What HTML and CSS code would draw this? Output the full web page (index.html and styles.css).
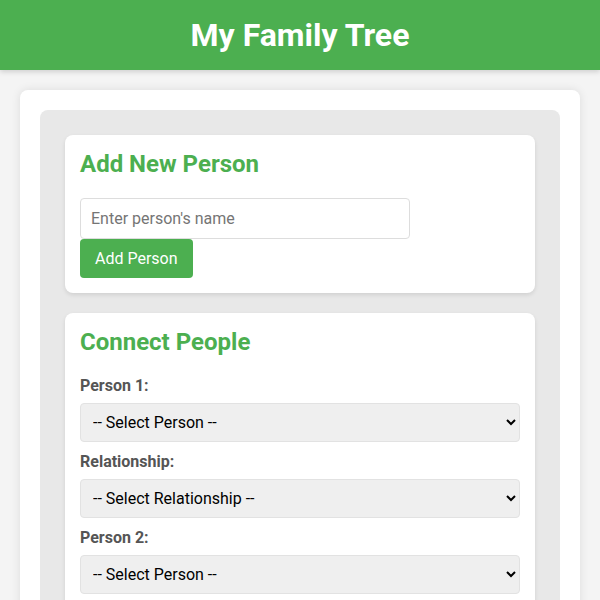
FILE: index.html
```html
<!DOCTYPE html>
<html>
<head>
<meta charset="utf-8">
<title>My Family Tree</title>
<link rel="stylesheet" href="styles.css">
</head>
<body>
<header class="header">
  <h1 class="title">My Family Tree</h1>
</header>
<main class="container">
  <div class="panel">
    <section class="card">
      <h2 class="card-title">Add New Person</h2>
      <input class="name-input" type="text" placeholder="Enter person's name">
      <button class="btn">Add Person</button>
    </section>
    <section class="card">
      <h2 class="card-title">Connect People</h2>
      <label class="field-label">Person 1:</label>
      <select class="field-select"><option>-- Select Person --</option></select>
      <label class="field-label">Relationship:</label>
      <select class="field-select"><option>-- Select Relationship --</option></select>
      <label class="field-label">Person 2:</label>
      <select class="field-select"><option>-- Select Person --</option></select>
    </section>
  </div>
</main>
</body>
</html>
```
FILE: styles.css
```css
* { box-sizing: border-box; }
html, body { margin: 0; padding: 0; }
body {
  background: #f4f4f4;
  font-family: Roboto, "Liberation Sans", Arial, sans-serif;
  color: #333;
}
.header {
  background: #4CAF50;
  height: 70px;
  display: flex;
  align-items: center;
  justify-content: center;
  box-shadow: 0 2px 5px rgba(0,0,0,0.15);
}
.title {
  margin: 0;
  color: #fff;
  font-size: 32px;
  font-weight: 700;
}
.container {
  margin: 20px 20px 0;
  background: #fff;
  border-radius: 8px;
  padding: 20px;
  box-shadow: 0 0 10px rgba(0,0,0,0.1);
}
.panel {
  background: #e8e8e8;
  border-radius: 8px;
  padding: 25px;
}
.card {
  background: #fff;
  border-radius: 8px;
  padding: 15px;
  margin-bottom: 20px;
  box-shadow: 0 2px 4px rgba(0,0,0,0.1);
}
.card-title {
  margin: 0 0 20px;
  color: #4CAF50;
  font-size: 24px;
  line-height: 28px;
  font-weight: 700;
}
.name-input {
  display: block;
  width: 330px;
  height: 41px;
  padding: 10px;
  border: 1px solid #ddd;
  border-radius: 4px;
  font-family: inherit;
  font-size: 16px;
  color: #333;
}
.name-input::placeholder { color: #757575; }
.btn {
  display: block;
  background: #4CAF50;
  color: #fff;
  border: none;
  border-radius: 4px;
  height: 39px;
  padding: 0 15px;
  font-family: inherit;
  font-size: 16px;
}
.field-label {
  display: block;
  font-weight: 700;
  color: #555;
  font-size: 16px;
  line-height: 19px;
  margin-bottom: 8px;
}
.field-select {
  display: block;
  width: 100%;
  height: 39px;
  padding: 0 8px;
  margin-bottom: 10px;
  background-color: #efefef;
  border: 1px solid #e2e2e2;
  border-radius: 4px;
  font-family: inherit;
  font-size: 16px;
  color: #000;
}
```
